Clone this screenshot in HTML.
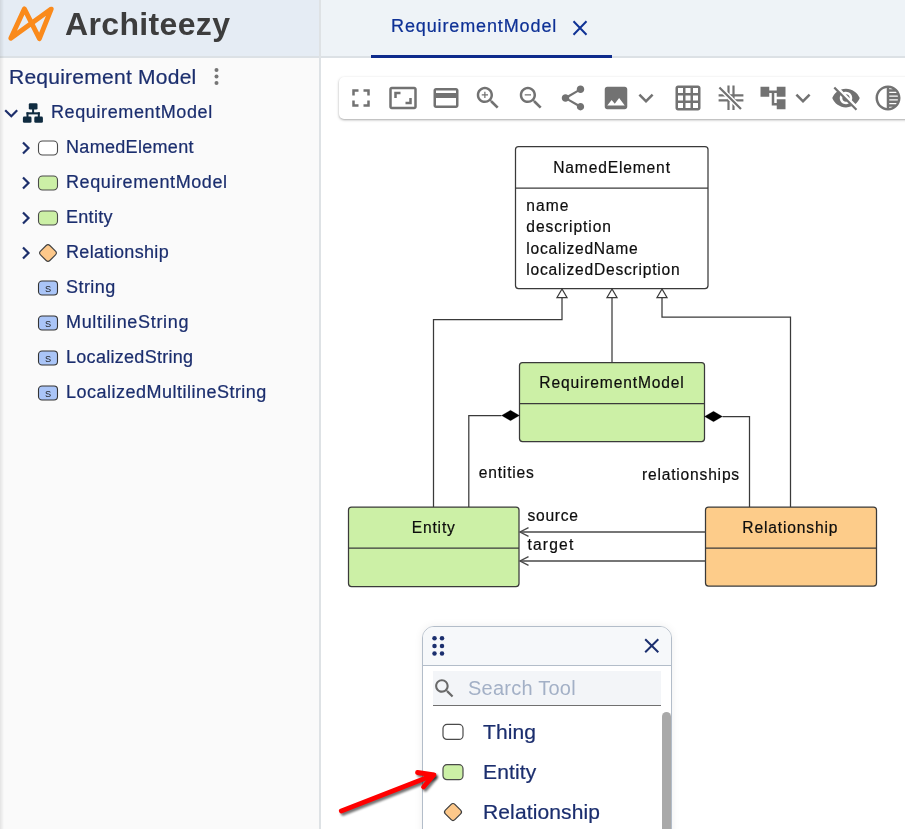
<!DOCTYPE html>
<html><head><meta charset="utf-8">
<style>
*{box-sizing:border-box;margin:0;padding:0}
html,body{width:905px;height:829px;overflow:hidden;background:#fff;font-family:"Liberation Sans",sans-serif}
.abs,.tree{will-change:transform}
.tree,.stitle,.tabtxt,.pitem{-webkit-text-stroke:0.22px currentColor}
.abs{position:absolute}
#hdrL{left:0;top:0;width:319px;height:56px;background:#e5ecf4}
#hdrR{left:321px;top:0;width:584px;height:56px;background:#eef3f7}
#hline{left:0;top:56px;width:905px;height:1.5px;background:#dce1e5}
#vline{left:319px;top:0;width:2px;height:829px;background:#dee2e5}
#side{left:0;top:57px;width:319px;height:772px;background:#fafafa}
#shadowL{left:0;top:0;width:4px;height:829px;background:linear-gradient(to right,rgba(0,0,0,0.09),rgba(0,0,0,0))}
.logotxt{left:65px;top:4px;font-size:32px;font-weight:700;color:#3d3d3d;letter-spacing:0.35px;line-height:40px}
.tabtxt{left:391px;top:14.8px;font-size:18px;color:#0e3196;letter-spacing:0.88px;line-height:22px}
#tabul{left:371px;top:54.5px;width:241px;height:2.5px;background:#0d2b8c}
.stitle{left:9px;top:64px;font-size:21px;color:#1c2f6e;letter-spacing:0.25px;line-height:26px}
.tree{position:absolute;font-size:18px;color:#1b2e6e;letter-spacing:0.45px;line-height:22px;white-space:nowrap}
</style></head><body>
<div id="side" class="abs"></div>
<div id="hdrL" class="abs"></div>
<div id="hdrR" class="abs"></div>
<div id="hline" class="abs"></div>
<div id="vline" class="abs"></div>
<div id="shadowL" class="abs"></div>

<!-- logo -->
<svg class="abs" style="left:0;top:0" width="60" height="56">
<path d="M10.8 38.2 L24.4 8.9 L39.4 38.7 L51.2 9.1 Z" fill="none" stroke="#fa8a1b" stroke-width="4.9" stroke-linejoin="round" stroke-linecap="round"/>
</svg>
<div class="abs logotxt">Architeezy</div>

<!-- tab -->
<div class="abs tabtxt">RequirementModel</div>
<svg class="abs" style="left:571.5px;top:19.5px" width="16" height="16"><path d="M1.5 1.3 L14.5 14.7 M14.5 1.3 L1.5 14.7" stroke="#0f3295" stroke-width="2"/></svg>
<div id="tabul" class="abs"></div>

<!-- sidebar -->
<div class="abs stitle">Requirement Model</div>
<svg class="abs" style="left:212px;top:67px" width="9" height="19"><circle cx="4.5" cy="3" r="2" fill="#757575"/><circle cx="4.5" cy="9.5" r="2" fill="#757575"/><circle cx="4.5" cy="16" r="2" fill="#757575"/></svg>


<!-- tree -->
<svg class="abs" style="left:3px;top:105.7px" width="16" height="14"><path d="M2.2 4.2 L8.3 10.2 L14.2 4.2" fill="none" stroke="#1d2f6b" stroke-width="2.2"/></svg>
<svg class="abs" style="left:0;top:98px" width="50" height="30" viewBox="0 98 50 30"><g fill="#0f2b40"><rect x="28.8" y="103.2" width="8.7" height="6.3" rx="1.3"/><rect x="32.1" y="109" width="2" height="4"/><rect x="26.5" y="112.3" width="13.3" height="2.1"/><rect x="26.5" y="112.3" width="2" height="5"/><rect x="37.8" y="112.3" width="2" height="5"/><rect x="22.9" y="116.6" width="8.6" height="6.2" rx="1.3"/><rect x="34.3" y="116.6" width="8.6" height="6.2" rx="1.3"/></g></svg>
<div class="tree" style="left:51px;top:101.0px;letter-spacing:0.61px">RequirementModel</div>
<svg class="abs" style="left:20px;top:140.5px" width="11" height="14"><path d="M3 1.5 L8.5 7 L3 12.5" fill="none" stroke="#1d2f6b" stroke-width="2.2"/></svg>
<svg class="abs" style="left:37px;top:139.5px" width="22" height="16"><rect x="1.5" y="1" width="19" height="14" rx="4" fill="#ffffff" stroke="#4a4a4a" stroke-width="1.1"/></svg>
<div class="tree" style="left:66px;top:136.0px;letter-spacing:0.31px">NamedElement</div>
<svg class="abs" style="left:20px;top:175.5px" width="11" height="14"><path d="M3 1.5 L8.5 7 L3 12.5" fill="none" stroke="#1d2f6b" stroke-width="2.2"/></svg>
<svg class="abs" style="left:37px;top:174.5px" width="22" height="16"><rect x="1.5" y="1" width="19" height="14" rx="4" fill="#ccf0a6" stroke="#4a4a4a" stroke-width="1.1"/></svg>
<div class="tree" style="left:66px;top:171.0px;letter-spacing:0.6px">RequirementModel</div>
<svg class="abs" style="left:20px;top:210.5px" width="11" height="14"><path d="M3 1.5 L8.5 7 L3 12.5" fill="none" stroke="#1d2f6b" stroke-width="2.2"/></svg>
<svg class="abs" style="left:37px;top:209.5px" width="22" height="16"><rect x="1.5" y="1" width="19" height="14" rx="4" fill="#ccf0a6" stroke="#4a4a4a" stroke-width="1.1"/></svg>
<div class="tree" style="left:66px;top:206.0px;letter-spacing:0.29px">Entity</div>
<svg class="abs" style="left:20px;top:245.5px" width="11" height="14"><path d="M3 1.5 L8.5 7 L3 12.5" fill="none" stroke="#1d2f6b" stroke-width="2.2"/></svg>
<svg class="abs" style="left:37px;top:242.5px" width="22" height="20"><rect x="4.4" y="3.4" width="13.2" height="13.2" rx="2.6" transform="rotate(45 11 10)" fill="#fdc88a" stroke="#3f3f3f" stroke-width="1.1"/></svg>
<div class="tree" style="left:66px;top:241.0px;letter-spacing:0.33px">Relationship</div>
<svg class="abs" style="left:37px;top:279.5px" width="22" height="16"><rect x="1.5" y="1" width="19" height="14" rx="3.5" fill="#aac5f7" stroke="#333" stroke-width="1.1"/><text x="11" y="11.6" text-anchor="middle" font-family="Liberation Sans" font-size="9.2" font-weight="400" fill="#1a1a1a">S</text></svg>
<div class="tree" style="left:66px;top:276.0px;letter-spacing:0.45px">String</div>
<svg class="abs" style="left:37px;top:314.5px" width="22" height="16"><rect x="1.5" y="1" width="19" height="14" rx="3.5" fill="#aac5f7" stroke="#333" stroke-width="1.1"/><text x="11" y="11.6" text-anchor="middle" font-family="Liberation Sans" font-size="9.2" font-weight="400" fill="#1a1a1a">S</text></svg>
<div class="tree" style="left:66px;top:311.0px;letter-spacing:0.67px">MultilineString</div>
<svg class="abs" style="left:37px;top:349.5px" width="22" height="16"><rect x="1.5" y="1" width="19" height="14" rx="3.5" fill="#aac5f7" stroke="#333" stroke-width="1.1"/><text x="11" y="11.6" text-anchor="middle" font-family="Liberation Sans" font-size="9.2" font-weight="400" fill="#1a1a1a">S</text></svg>
<div class="tree" style="left:66px;top:346.0px;letter-spacing:0.29px">LocalizedString</div>
<svg class="abs" style="left:37px;top:384.5px" width="22" height="16"><rect x="1.5" y="1" width="19" height="14" rx="3.5" fill="#aac5f7" stroke="#333" stroke-width="1.1"/><text x="11" y="11.6" text-anchor="middle" font-family="Liberation Sans" font-size="9.2" font-weight="400" fill="#1a1a1a">S</text></svg>
<div class="tree" style="left:66px;top:381.0px;letter-spacing:0.49px">LocalizedMultilineString</div>

<!-- toolbar -->
<div class="abs" style="left:339px;top:77px;width:600px;height:42px;background:#fff;border-radius:5px;box-shadow:0 1px 2.5px rgba(0,0,0,0.35)"></div>
<svg class="abs" style="left:346px;top:83px" width="30" height="30" viewBox="0 0 24 24"><path d="M7 14H5v5h5v-2H7v-3zm-2-4h2V7h3V5H5v5zm12 7h-3v2h5v-5h-2v3zM14 5v2h3v3h2V5h-5z" fill="#727272"/></svg>
<svg class="abs" style="left:387.5px;top:83px" width="30" height="30" viewBox="0 0 24 24"><path d="M19 12h-2v3h-3v2h5v-5zM7 9h3V7H5v5h2V9zm14-6H3c-1.1 0-2 .9-2 2v14c0 1.1.9 2 2 2h18c1.1 0 2-.9 2-2V5c0-1.1-.9-2-2-2zm0 16.01H3V4.99h18v14.02z" fill="#727272"/></svg>
<svg class="abs" style="left:431px;top:83px" width="30" height="30" viewBox="0 0 24 24"><path d="M20 4H4c-1.11 0-1.99.89-1.99 2L2 18c0 1.11.89 2 2 2h16c1.11 0 2-.89 2-2V6c0-1.11-.89-2-2-2zm0 14H4v-6h16v6zm0-10H4V6h16v2z" fill="#727272"/></svg>
<svg class="abs" style="left:472.75px;top:83px" width="30" height="30" viewBox="0 0 24 24"><path d="M15.5 14h-.79l-.28-.27C15.41 12.59 16 11.11 16 9.5 16 5.91 13.09 3 9.5 3S3 5.91 3 9.5 5.91 16 9.5 16c1.61 0 3.09-.59 4.23-1.57l.27.28v.79l5 4.99L20.49 19l-4.99-5zm-6 0C7.01 14 5 11.99 5 9.5S7.01 5 9.5 5 14 7.01 14 9.5 11.99 14 9.5 14zm.5-7H9v2H7v1h2v2h1v-2h2V9h-2z" fill="#727272"/></svg>
<svg class="abs" style="left:516px;top:83px" width="30" height="30" viewBox="0 0 24 24"><path d="M15.5 14h-.79l-.28-.27C15.41 12.59 16 11.11 16 9.5 16 5.91 13.09 3 9.5 3S3 5.91 3 9.5 5.91 16 9.5 16c1.61 0 3.09-.59 4.23-1.57l.27.28v.79l5 4.99L20.49 19l-4.99-5zm-6 0C7.01 14 5 11.99 5 9.5S7.01 5 9.5 5 14 7.01 14 9.5 11.99 14 9.5 14zM7 9h5v1H7z" fill="#727272"/></svg>
<svg class="abs" style="left:557.6px;top:83px" width="30" height="30" viewBox="0 0 24 24"><path d="M18 16.08c-.76 0-1.44.3-1.96.77L8.91 12.7c.05-.23.09-.46.09-.7s-.04-.47-.09-.7l7.05-4.11c.54.5 1.25.81 2.04.81 1.66 0 3-1.34 3-3s-1.34-3-3-3-3 1.34-3 3c0 .24.04.47.09.7L8.04 9.81C7.5 9.31 6.79 9 6 9c-1.66 0-3 1.34-3 3s1.34 3 3 3c.79 0 1.5-.31 2.04-.81l7.12 4.16c-.05.21-.08.43-.08.65 0 1.61 1.31 2.92 2.92 2.92 1.61 0 2.92-1.31 2.92-2.92s-1.31-2.92-2.92-2.92z" fill="#727272"/></svg>
<svg class="abs" style="left:601px;top:83px" width="30" height="30" viewBox="0 0 24 24"><path d="M21 19V5c0-1.1-.9-2-2-2H5c-1.1 0-2 .9-2 2v14c0 1.1.9 2 2 2h14c1.1 0 2-.9 2-2zM8.5 13.5l2.5 3.01L14.5 12l4.5 6H5l3.5-4.5z" fill="#727272"/></svg>
<svg class="abs" style="left:630.6px;top:83px" width="30" height="30" viewBox="0 0 24 24"><path d="M16.59 8.59L12 13.17 7.41 8.59 6 10l6 6 6-6z" fill="#727272"/></svg>
<svg class="abs" style="left:673px;top:83px" width="30" height="30" viewBox="0 0 24 24"><path d="M20 2H4c-1.1 0-2 .9-2 2v16c0 1.1.9 2 2 2h16c1.1 0 2-.9 2-2V4c0-1.1-.9-2-2-2zM8 20H4v-4h4v4zm0-6H4v-4h4v4zm0-6H4V4h4v4zm6 12h-4v-4h4v4zm0-6h-4v-4h4v4zm0-6h-4V4h4v4zm6 12h-4v-4h4v4zm0-6h-4v-4h4v4zm0-6h-4V4h4v4z" fill="#727272"/></svg>
<svg class="abs" style="left:758px;top:83px" width="30" height="30" viewBox="0 0 24 24"><path d="M22 11V3h-7v3H9V3H2v8h7V8h2v10h4v3h7v-8h-7v3h-2V8h2v3z" fill="#727272"/></svg>
<svg class="abs" style="left:788px;top:83px" width="30" height="30" viewBox="0 0 24 24"><path d="M16.59 8.59L12 13.17 7.41 8.59 6 10l6 6 6-6z" fill="#727272"/></svg>
<svg class="abs" style="left:830.75px;top:83px" width="30" height="30" viewBox="0 0 24 24"><path d="M12 7c2.76 0 5 2.24 5 5 0 .65-.13 1.26-.36 1.83l2.92 2.92c1.51-1.26 2.7-2.89 3.43-4.75-1.73-4.39-6-7.5-11-7.5-1.4 0-2.74.25-3.98.7l2.16 2.16C10.74 7.130 11.35 7 12 7zM2 4.27l2.28 2.28.46.46C3.08 8.3 1.78 10.02 1 12c1.73 4.39 6 7.5 11 7.5 1.55 0 3.03-.3 4.380-.84l.42.42L19.73 22 21 20.73 3.27 3 2 4.27zM7.53 9.8l1.55 1.55c-.05.21-.08.43-.08.65 0 1.66 1.34 3 3 3 .22 0 .44-.03.65-.08l1.55 1.55c-.67.33-1.41.53-2.2.53-2.76 0-5-2.240-5-5 0-.79.2-1.53.53-2.2zm4.31-.78l3.15 3.15.02-.16c0-1.66-1.34-3-3-3l-.17.01z" fill="#727272"/></svg>
<svg class="abs" style="left:873.3px;top:83px" width="30" height="30" viewBox="0 0 24 24"><path d="M12 2C6.48 2 2 6.48 2 12s4.48 10 10 10 10-4.48 10-10S17.52 2 12 2zm-1 17.93c-3.94-.49-7-3.85-7-7.93s3.05-7.44 7-7.93v15.86zm2-15.86c1.03.13 2 .45 2.87.93H13v-.93zM13 7h5.24c.25.31.48.65.68 1H13V7zm0 3h6.74c.08.33.15.66.19 1H13v-1zm0 9.93V19h2.87c-.87.48-1.84.8-2.87.93zM18.24 17H13v-1h5.92c-.2.35-.43.69-.68 1zm1.5-3H13v-1h6.93c-.04.34-.11.67-.19 1z" fill="#727272"/></svg>
<svg class="abs" style="left:716px;top:83px" width="30" height="30" viewBox="716 83 30 30">
<g stroke="#727272" stroke-width="2.2" fill="none">
<path d="M718.6 95.45H743.4 M718.6 100.4H743.4 M728.5 85.5V110.1 M733.5 85.5V110.1"/>
</g>
<path d="M719.4 87.5 L741 109" stroke="#fff" stroke-width="5"/>
<path d="M719.4 87.5 L741 109" stroke="#727272" stroke-width="2.2"/>
</svg>

<!-- diagram -->
<svg class="abs" style="left:0;top:0" width="905" height="829" viewBox="0 0 905 829">
<g font-family="Liberation Sans" font-size="15.6" fill="#0d0d0d" stroke="#0d0d0d" stroke-width="0.2" letter-spacing="0.85">
<rect x="515.5" y="146.5" width="192.5" height="142" rx="3" fill="#fff" stroke="#3a3a3a" stroke-width="1.25"/>
<path d="M515.5 188H708" stroke="#3a3a3a" stroke-width="1.25"/>
<text x="612" y="172.5" text-anchor="middle">NamedElement</text>
<text x="526.3" y="210.8" letter-spacing="1.0">name</text>
<text x="526.3" y="232.2" letter-spacing="0.93">description</text>
<text x="526.3" y="253.6" letter-spacing="0.76">localizedName</text>
<text x="526.3" y="275" letter-spacing="0.77">localizedDescription</text>

<rect x="519.5" y="362.5" width="185" height="79" rx="3" fill="#ccf0a6" stroke="#3a3a3a" stroke-width="1.25"/>
<path d="M519.5 403.5H704.5" stroke="#3a3a3a" stroke-width="1.25"/>
<text x="612" y="388.2" text-anchor="middle">RequirementModel</text>

<rect x="348.5" y="507" width="170.5" height="79.5" rx="3" fill="#ccf0a6" stroke="#3a3a3a" stroke-width="1.25"/>
<path d="M348.5 548H519" stroke="#3a3a3a" stroke-width="1.25"/>
<text x="433.7" y="533.3" text-anchor="middle">Entity</text>

<rect x="705.5" y="507" width="171" height="79" rx="3" fill="#fdcc8a" stroke="#3a3a3a" stroke-width="1.25"/>
<path d="M705.5 548H876.5" stroke="#3a3a3a" stroke-width="1.25"/>
<text x="790.3" y="532.8" text-anchor="middle">Relationship</text>

<g fill="none" stroke="#3a3a3a" stroke-width="1.25">
<path d="M562 297.5V319.5H433.5V507"/>
<path d="M612 297.5V362.5"/>
<path d="M662 297.5V317H790.5V507"/>
<path d="M562 289L557 297.5H567Z"/>
<path d="M612 289L607 297.5H617Z"/>
<path d="M662 289L657 297.5H667Z"/>
<path d="M501.5 415.5H468.8V507"/>
<path d="M722.5 416.5H749.5V507"/>
</g><g fill="none" stroke="#484848" stroke-width="1.35"><path d="M705.5 532H520"/><path d="M528.5 527.7L520 532L528.5 536.3"/><path d="M705.5 561H520"/>
<path d="M528.5 556.7L520 561L528.5 565.3"/>
</g>
<path d="M519.5 415.5L510.5 410.3L501.5 415.5L510.5 420.7Z" fill="#000"/>
<path d="M704.5 416.5L713.5 411.3L722.5 416.5L713.5 421.7Z" fill="#000"/>
<text x="478.8" y="478" letter-spacing="0.8">entities</text>
<text x="642" y="480.1" letter-spacing="0.8">relationships</text>
<text x="527.4" y="521.4" letter-spacing="0.76">source</text>
<text x="527.4" y="550.2" letter-spacing="1.2">target</text>
</g>
</svg>

<!-- palette -->
<div class="abs" style="left:422px;top:625.7px;width:250px;height:230px;background:#fff;border:1px solid #b3bdc9;border-radius:12px;overflow:hidden;box-shadow:0 0 9px rgba(0,0,0,0.07)">
  <div class="abs" style="left:0;top:0;width:100%;height:39px;background:#f6f8fa;border-bottom:1px solid #b3bdc9"></div>
</div>
<svg class="abs" style="left:428px;top:633px" width="20" height="26"><g fill="#1b2f6e"><circle cx="6.5" cy="5.3" r="2.25"/><circle cx="14" cy="5.3" r="2.25"/><circle cx="6.5" cy="12.9" r="2.25"/><circle cx="14" cy="12.9" r="2.25"/><circle cx="6.5" cy="20.5" r="2.25"/><circle cx="14" cy="20.5" r="2.25"/></g></svg>
<svg class="abs" style="left:644px;top:638px" width="16" height="16"><path d="M1.2 1.2L14.3 14.3M14.3 1.2L1.2 14.3" stroke="#1b2f6e" stroke-width="2"/></svg>
<div class="abs" style="left:433px;top:671px;width:228px;height:35px;background:#f3f5f8;border-bottom:1.5px solid #707070"></div>
<svg class="abs" style="left:431.75px;top:676.25px" width="25" height="25" viewBox="0 0 24 24"><path d="M15.5 14h-.79l-.28-.27C15.41 12.59 16 11.11 16 9.5 16 5.91 13.09 3 9.5 3S3 5.910 3 9.5 5.91 16 9.5 16c1.61 0 3.09-.59 4.23-1.57l.27.28v.79l5 4.99L20.49 19l-4.99-5zm-6 0C7.01 14 5 11.99 5 9.5S7.01 5 9.5 5 14 7.01 14 9.5 11.99 14 9.5 14z" fill="#6a6a6a"/></svg>
<div class="abs" style="left:468px;top:675.8px;font-size:20px;line-height:24px;color:#a3b0c6;letter-spacing:0.24px">Search Tool</div>
<div class="abs" style="left:661.5px;top:712px;width:9px;height:130px;background:#a9a9a9;border-radius:4.5px 4.5px 0 0"></div>
<svg class="abs" style="left:441px;top:722px" width="24" height="19"><rect x="2" y="2.4" width="20" height="15" rx="4" fill="#fff" stroke="#4a4a4a" stroke-width="1.2"/></svg>
<svg class="abs" style="left:441px;top:762px" width="24" height="19"><rect x="2" y="2.7" width="20" height="15" rx="4" fill="#ccf0a6" stroke="#4a4a4a" stroke-width="1.2"/></svg>
<svg class="abs" style="left:441px;top:801px" width="24" height="22"><rect x="5.3" y="4.3" width="13.4" height="13.4" rx="2.6" transform="rotate(45 12 11)" fill="#fdc88a" stroke="#3f3f3f" stroke-width="1.2"/></svg>
<div class="abs pitem" style="left:483px;top:719px;font-size:21px;line-height:26px;color:#1b2e6e;letter-spacing:0.13px">Thing</div>
<div class="abs pitem" style="left:483px;top:759px;font-size:21px;line-height:26px;color:#1b2e6e;letter-spacing:0.13px">Entity</div>
<div class="abs pitem" style="left:483px;top:799px;font-size:21px;line-height:26px;color:#1b2e6e;letter-spacing:0.13px">Relationship</div>

<!-- red arrow -->
<svg class="abs" style="left:320px;top:750px" width="130" height="79" viewBox="320 750 130 79">
<defs><filter id="sh" x="-20%" y="-50%" width="140%" height="200%"><feGaussianBlur stdDeviation="1.3"/></filter></defs>
<g transform="translate(1.8,2.2)" stroke="#000" stroke-opacity="0.55" stroke-width="4.8" fill="none" stroke-linecap="round" stroke-linejoin="round" filter="url(#sh)">
<path d="M341.3 811L433 775.2"/><path d="M417.5 772.5L434 774.8L423.5 787"/>
</g>
<g stroke="#ff0000" stroke-width="4.8" fill="none" stroke-linecap="round" stroke-linejoin="round">
<path d="M341.3 811L433 775.2"/><path d="M417.5 772.5L434 774.8L423.5 787"/>
</g>
</svg>
</body></html>
